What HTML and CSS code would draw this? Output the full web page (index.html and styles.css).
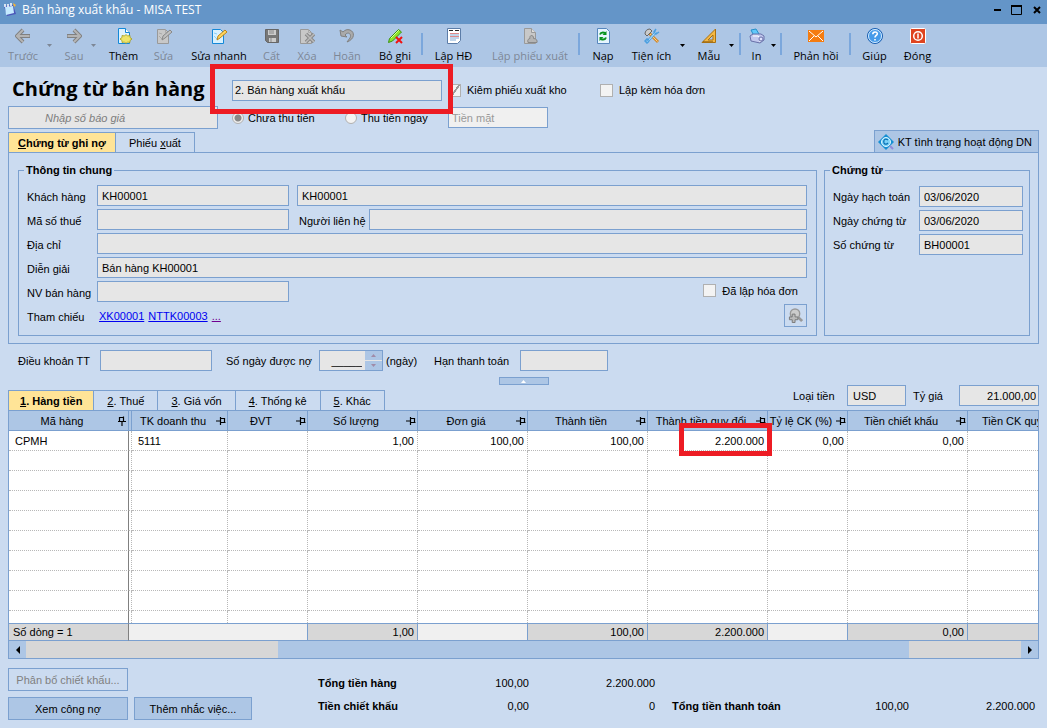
FILE: index.html
```
<!DOCTYPE html>
<html lang="vi">
<head>
<meta charset="utf-8">
<title>Bán hàng xuất khẩu - MISA TEST</title>
<link rel="stylesheet" href="styles.css">
</head>
<body>
<svg class="defs" aria-hidden="true">
  <symbol id="pin" viewBox="0 0 10 8"><path d="M0 4h4M4.500 0v8M4.500 1.500h4v4h-4M4.500 5.500h5" fill="none" stroke="#000" stroke-width="1.200"/></symbol>
  <symbol id="down" viewBox="0 0 5 3"><path d="M0 0h5L2.500 3z" fill="currentColor"/></symbol>
</svg>

<header class="titlebar">
  <svg class="app-icon" viewBox="0 0 14 14"><path d="M1 3l9-1 3 9-9 2z" fill="#4b55b8"/><path d="M2 4l8-1 1 7-8 2z" fill="#c4eaff"/><path d="M2 1v3M5 1v3M8 0v3" stroke="#fff" stroke-width="1.500"/><path d="M10 0l3 2-2 2z" fill="#ffb52b"/></svg>
  <span class="title">Bán hàng xuất khẩu - MISA TEST</span>
  <button class="win" aria-label="Thu nhỏ"><svg viewBox="0 0 12 12"><path d="M3 6h7" stroke="#000" stroke-width="2"/></svg></button>
  <button class="win" aria-label="Phóng to"><svg viewBox="0 0 12 12"><path d="M.5 10.500h10v-9H.5z" fill="none" stroke="#000"/><path d="M0 2h11" stroke="#000" stroke-width="2"/></svg></button>
  <button class="win" aria-label="Đóng cửa sổ"><svg viewBox="0 0 12 12"><path d="M3 3l6 6M9 3l-6 6" stroke="#000" stroke-width="2"/></svg></button>
</header>

<nav class="toolbar">
  <button class="tool off"><svg viewBox="0 0 16 16"><path d="M8 2L2 8l6 6M2.500 8H15" fill="none" stroke="#808080" stroke-width="4"/><path d="M8 2L2 8l6 6M2.500 8H14.500" fill="none" stroke="#b4b4b4" stroke-width="2"/></svg>Trước</button>
  <button class="drop off" aria-label="Mở Trước"><svg><use href="#down"/></svg></button>
  <button class="tool off"><svg viewBox="0 0 16 16"><path d="M8 2l6 6-6 6M13.500 8H1" fill="none" stroke="#808080" stroke-width="4"/><path d="M8 2l6 6-6 6M13.500 8H1.500" fill="none" stroke="#b4b4b4" stroke-width="2"/></svg>Sau</button>
  <button class="drop off" aria-label="Mở Sau"><svg><use href="#down"/></svg></button>
  <button class="tool"><svg viewBox="0 0 16 16"><path d="M2.500.500h7l4 4v11h-11z" fill="#dff3ff" stroke="#1488d8"/><path d="M9.500.500v4h4" fill="#fff" stroke="#1488d8"/><path d="M10 6.500l1.500 1.500 2.500-.500v2l2 1.500-2 1.500v2l-2.500-.500-1.500 1.500-1.500-1.500-2.500.500v-2L4 11l2-1.500v-2l2.500.500z" fill="#eee56b" stroke="#a39b18" stroke-width=".8"/></svg>Thêm</button>
  <button class="tool off"><svg viewBox="0 0 16 16"><path d="M1.500 1.500h8l3 3v11h-11z" fill="#c8c8c8" stroke="#999"/><path d="M9.500 1.500v3h3M3 5l3 1M3 8l3 3" fill="none" stroke="#aaa"/><path d="M6 12l1-4 7-6 2 2-7 6z" fill="#c0c0c0" stroke="#888"/></svg>Sửa</button>
  <button class="tool"><svg viewBox="0 0 16 16"><path d="M1.500 1.500h8l3 3v11h-11z" fill="#d8f1ff" stroke="#1488d8"/><path d="M3 5l3 1M3 8l3 3" stroke="#8ad0fa"/><path d="M6 12l1-4 7-6 2 2-7 6z" fill="#ffd65c" stroke="#bd8419"/></svg>Sửa nhanh</button>
  <button class="tool off"><svg viewBox="0 0 16 16"><path d="M1.500 1.500h13v13h-11l-2-2z" fill="#777" stroke="#666"/><path d="M4 2h8v5H4zM5 10h7v4H5z" fill="#ccc"/><path d="M5 3h5M5 5h5M7 10v4" stroke="#888"/></svg>Cất</button>
  <button class="tool off"><svg viewBox="0 0 16 16"><path d="M1.500 1.500h8l3 3v11h-11z" fill="#c8c8c8" stroke="#999"/><path d="M9.500 1.500v3h3" fill="none" stroke="#aaa"/><path d="M7 6l8 8M15 6l-8 8" stroke="#888" stroke-width="3.600"/><path d="M7 6l8 8M15 6l-8 8" stroke="#bbb" stroke-width="1.500"/></svg>Xóa</button>
  <button class="tool off"><svg viewBox="0 0 16 16"><path d="M1 2l1 6 6 1-2-2c3-4 7-1 5 3l-3 4c8-3 8-10 3-12-3-1-5 0-7 2z" fill="#aaa" stroke="#808080"/></svg>Hoãn</button>
  <button class="tool"><svg viewBox="0 0 16 16"><path d="M1.500 14.500l1-4 9-9 3 2.500-9 9z" fill="#8ce52c" stroke="#3a9212"/><path d="M4 10l8-8" stroke="#d8ff9e"/><path d="M9 9l6 6M15 9l-6 6" stroke="#f01010" stroke-width="2"/></svg>Bỏ ghi</button>
  <span class="sep"></span>
  <button class="tool"><svg viewBox="0 0 16 16"><path d="M1.500.500h13v12l-3 3h-10z" fill="#fff" stroke="#5c7da8"/><path d="M3 2.500h4M9 2.500h4" stroke="#222"/><path d="M4 5.500h9M4 8.500h9" stroke="#e08a8a"/><path d="M4 7h9M4 10h9M4 12h6" stroke="#7fa9d6"/></svg>Lập HĐ</button>
  <button class="tool off"><svg viewBox="0 0 16 16"><path d="M2.500.500h7l4 4v11h-11z" fill="#c8c8c8" stroke="#999"/><path d="M9.500.500v4h4" fill="#ddd" stroke="#999"/><path d="M6 14.500c-1-3 1-4 2-4-1-4 4-4 3.500 0 3 0 4 2 3.500 4z" fill="#b4b4b4" stroke="#888"/></svg>Lập phiếu xuất</button>
  <span class="sep"></span>
  <button class="tool"><svg viewBox="0 0 16 16"><path d="M2.500.500h9l3 3v12h-12z" fill="#e6f5ff" stroke="#5686bd"/><path d="M5 6.500c1-3 5-2 5-1M11 9.500c-1 3-5 2-5 1" fill="none" stroke="#07931d" stroke-width="2"/><path d="M11.500 3v4h-4zM4.500 13V9h4z" fill="#07931d"/></svg>Nạp</button>
  <button class="tool"><svg viewBox="0 0 16 16"><path d="M5 5l9 9" stroke="#d08a30" stroke-width="3"/><path d="M6 6l7.500 7.500" stroke="#ffd080"/><path d="M1 6c0-3 2-5 5-5l2 2-5 5z" fill="#ccc" stroke="#666"/><path d="M3 14l9-10" stroke="#4a9fe0" stroke-width="2.600"/><path d="M3 14l9-10" stroke="#d5efff"/><path d="M12 1l-2 3 2 2 3-2M5 12l-2-1-2 2 2 2 2-2" fill="none" stroke="#4a9fe0" stroke-width="1.500"/></svg>Tiện ích</button>
  <button class="drop" aria-label="Mở Tiện ích"><svg><use href="#down"/></svg></button>
  <button class="tool"><svg viewBox="0 0 16 16"><path d="M1 14.500L14.500 1v13.500z" fill="#f5b844" stroke="#a97010"/><path d="M7 12l5-5v5z" fill="#adc6e5" stroke="#a97010"/><path d="M3 14v-1M5 14v-1M7 14v-1M9 14v-1M11 14v-1" stroke="#704500"/></svg>Mẫu</button>
  <button class="drop" aria-label="Mở Mẫu"><svg><use href="#down"/></svg></button>
  <span class="sep"></span>
  <button class="tool"><svg viewBox="0 0 16 16"><path d="M2 2l5-1 3 5-5 2z" fill="#62c8fa" stroke="#278fc9"/><path d="M1 8l3-2h8l3 2v4l-4 3-9-2z" fill="#c2c8ee" stroke="#6870a8"/><path d="M4 8h5l2 2v4" fill="none" stroke="#fff"/><circle cx="12" cy="11" r="2" fill="#dfe3ff" stroke="#6870a8"/></svg>In</button>
  <button class="drop" aria-label="Mở In"><svg><use href="#down"/></svg></button>
  <span class="sep"></span>
  <button class="tool"><svg viewBox="0 0 16 16"><path d="M0 2h16v12H0z" fill="#f57c10"/><path d="M1 3l7 6 7-6M1 13l5-5M15 13l-5-5" fill="none" stroke="#fff"/></svg>Phản hồi</button>
  <span class="sep"></span>
  <button class="tool"><svg viewBox="0 0 16 16"><circle cx="8" cy="8" r="7.500" fill="#469be9" stroke="#1b5fb0"/><circle cx="8" cy="8" r="6.500" fill="none" stroke="#d6ecff"/><path d="M5.800 6.300c0-3 4.500-3 4.500-.5C10.300 7.500 8 7.500 8 9.500M8 11v1.600" fill="none" stroke="#fff" stroke-width="1.600"/></svg>Giúp</button>
  <button class="tool"><svg viewBox="0 0 16 16"><rect x=".5" y=".5" width="15" height="15" rx="1" fill="#df4420" stroke="#fff"/><circle cx="8" cy="8" r="4.300" fill="none" stroke="#fff" stroke-width="1.500"/><path d="M8 5.500v5" stroke="#fff" stroke-width="1.500"/></svg>Đóng</button>
</nav>

<main class="content">
  <section class="top">
    <h1>Chứng từ bán hàng</h1>
    <div class="kind"><input class="field" aria-label="Loại chứng từ" value="2. Bán hàng xuất khẩu"><span class="mark mark-kind"></span></div>
    <label class="check"><input type="checkbox" checked disabled>Kiêm phiếu xuất kho</label>
    <label class="check"><input type="checkbox" disabled>Lập kèm hóa đơn</label>
    <input class="field quote" aria-label="Số báo giá" placeholder="Nhập số báo giá">
    <div class="radios">
      <label class="radio"><input type="radio" name="pay" checked disabled>Chưa thu tiền</label>
      <label class="radio"><input type="radio" name="pay" disabled>Thu tiền ngay</label>
    </div>
    <input class="field cash" aria-label="Hình thức" value="Tiền mặt" disabled>
  </section>

  <div class="tabs main-tabs">
    <button class="tab active"><span><u>C</u>hứng từ ghi nợ</span></button>
    <button class="tab"><span>Phiếu <u>x</u>uất</span></button>
    <button class="status"><svg viewBox="0 0 16 16"><path d="M8 0l8 8-8 8-8-8z" fill="#168fd3"/><circle cx="8" cy="8" r="4.500" fill="#7bd2f7" stroke="#dff6ff"/><path d="M10 6c-3-2-5 0-4 3 1 2 3 1 4 0" fill="none" stroke="#0870b5" stroke-width="1.300"/><path d="M12 12l3 3" stroke="#8f8cdc" stroke-width="2"/></svg>KT tình trạng hoạt động DN</button>
  </div>

  <section class="panel">
    <fieldset class="group general">
      <legend>Thông tin chung</legend>
      <div class="row"><label class="cap" for="kh">Khách hàng</label><input id="kh" class="field w-code" value="KH00001"><input class="field grow" aria-label="Tên khách hàng" value="KH00001"></div>
      <div class="row"><label class="cap" for="mst">Mã số thuế</label><input id="mst" class="field w-code"><label class="contact" for="nlh">Người liên hệ</label><input id="nlh" class="field grow flush"></div>
      <div class="row"><label class="cap" for="dc">Địa chỉ</label><input id="dc" class="field grow flush"></div>
      <div class="row"><label class="cap" for="dg">Diễn giải</label><input id="dg" class="field grow flush" value="Bán hàng KH00001"></div>
      <div class="row"><label class="cap" for="nv">NV bán hàng</label><input id="nv" class="field w-code"><label class="check made"><input type="checkbox" disabled>Đã lập hóa đơn</label></div>
      <div class="row"><span class="cap">Tham chiếu</span><span class="refs"><a href="#">XK00001</a> <a href="#">NTTK00003</a> <a href="#" class="more">...</a></span><button class="find" aria-label="Tìm"><svg viewBox="0 0 16 16"><circle cx="7.500" cy="6" r="5" fill="#ccc" stroke="#999" stroke-width="1.500"/><path d="M11 10l4 4" stroke="#999" stroke-width="3"/><path d="M4.500 6.500h3v3h3v3h-3v3h-3v-3h-3v-3h3z" fill="#bbb" stroke="#777"/></svg></button></div>
    </fieldset>
    <fieldset class="group voucher">
      <legend>Chứng từ</legend>
      <div class="row"><label class="cap" for="nht">Ngày hạch toán</label><input id="nht" class="field grow" value="03/06/2020"></div>
      <div class="row"><label class="cap" for="nct">Ngày chứng từ</label><input id="nct" class="field grow" value="03/06/2020"></div>
      <div class="row"><label class="cap" for="sct">Số chứng từ</label><input id="sct" class="field grow" value="BH00001"></div>
    </fieldset>
  </section>

  <section class="terms">
    <label class="t-cap1" for="dk">Điều khoản TT</label><input id="dk" class="field t-in1">
    <label class="t-cap2" for="sn">Số ngày được nợ</label>
    <span class="spin"><input id="sn" value="_____"><span class="steps"><button aria-label="Tăng"><svg viewBox="0 0 5 3"><path d="M0 3h5L2.500 0z" fill="#a08ba8"/></svg></button><button aria-label="Giảm"><svg viewBox="0 0 5 3"><path d="M0 0h5L2.500 3z" fill="#a08ba8"/></svg></button></span></span>
    <span class="unit">(ngày)</span>
    <label class="t-cap3" for="ht">Hạn thanh toán</label><input id="ht" class="field t-in3">
  </section>

  <div class="fold"><button aria-label="Thu gọn"><svg viewBox="0 0 5 3"><path d="M0 3h5L2.500 0z" fill="#fff"/></svg></button></div>

  <div class="tabs grid-tabs">
    <button class="tab active"><span><u>1</u>. Hàng tiền</span></button>
    <button class="tab"><span><u>2</u>. Thuế</span></button>
    <button class="tab"><span><u>3</u>. Giá vốn</span></button>
    <button class="tab"><span><u>4</u>. Thống kê</span></button>
    <button class="tab"><span><u>5</u>. Khác</span></button>
    <div class="money"><label class="m-cap1" for="lt">Loại tiền</label><input id="lt" class="field m-in1" value="USD"><label class="m-cap2" for="tg">Tỷ giá</label><input id="tg" class="field m-in2" value="21.000,00"></div>
  </div>

  <section class="gridbox">
    <div class="scroller">
      <table>
        <colgroup><col class="c120"><col class="c3"><col class="c96"><col class="c80"><col class="c110"><col class="c110"><col class="c120"><col class="c120"><col class="c80"><col class="c120"><col class="c120"></colgroup>
        <thead><tr>
          <th><div><span>Mã hàng</span><svg class="up"><use href="#pin"/></svg></div></th><th></th>
          <th><div><span>TK doanh thu</span><svg><use href="#pin"/></svg></div></th>
          <th><div><span>ĐVT</span><svg><use href="#pin"/></svg></div></th>
          <th><div><span>Số lượng</span><svg><use href="#pin"/></svg></div></th>
          <th><div><span>Đơn giá</span><svg><use href="#pin"/></svg></div></th>
          <th><div><span>Thành tiền</span><svg><use href="#pin"/></svg></div></th>
          <th><div><span>Thành tiền quy đổi</span><svg><use href="#pin"/></svg></div></th>
          <th><div><span>Tỷ lệ CK (%)</span><svg><use href="#pin"/></svg></div></th>
          <th><div><span>Tiền chiết khấu</span><svg><use href="#pin"/></svg></div></th>
          <th><div><span>Tiền CK quy đổi</span><svg><use href="#pin"/></svg></div></th>
        </tr></thead>
        <tbody>
          <tr><td>CPMH</td><td></td><td>5111</td><td></td><td class="num">1,00</td><td class="num">100,00</td><td class="num">100,00</td><td class="num marked">2.200.000<span class="mark mark-cell"></span></td><td class="num">0,00</td><td class="num">0,00</td><td></td></tr>
          <tr><td></td><td></td><td></td><td></td><td></td><td></td><td></td><td></td><td></td><td></td><td></td></tr>
          <tr><td></td><td></td><td></td><td></td><td></td><td></td><td></td><td></td><td></td><td></td><td></td></tr>
          <tr><td></td><td></td><td></td><td></td><td></td><td></td><td></td><td></td><td></td><td></td><td></td></tr>
          <tr><td></td><td></td><td></td><td></td><td></td><td></td><td></td><td></td><td></td><td></td><td></td></tr>
          <tr><td></td><td></td><td></td><td></td><td></td><td></td><td></td><td></td><td></td><td></td><td></td></tr>
          <tr><td></td><td></td><td></td><td></td><td></td><td></td><td></td><td></td><td></td><td></td><td></td></tr>
          <tr><td></td><td></td><td></td><td></td><td></td><td></td><td></td><td></td><td></td><td></td><td></td></tr>
          <tr><td></td><td></td><td></td><td></td><td></td><td></td><td></td><td></td><td></td><td></td><td></td></tr>
          <tr class="cut"><td></td><td></td><td></td><td></td><td></td><td></td><td></td><td></td><td></td><td></td><td></td></tr>
        </tbody>
        <tfoot><tr><td>Số dòng = 1</td><td colspan="3" class="blank"></td><td class="num">1,00</td><td class="blank"></td><td class="num">100,00</td><td class="num">2.200.000</td><td class="blank"></td><td class="num">0,00</td><td></td></tr></tfoot>
      </table>
    </div>
    <div class="scrollbar">
      <button aria-label="Cuộn trái"><svg viewBox="0 0 4 8"><path d="M4 0v8L0 4z"/></svg></button>
      <span class="track before"></span><span class="thumb"></span><span class="track after"></span>
      <button aria-label="Cuộn phải"><svg viewBox="0 0 4 8"><path d="M0 0v8l4-4z"/></svg></button>
    </div>
  </section>

  <footer class="bottom">
    <div class="actions">
      <button class="btn" disabled>Phân bổ chiết khấu...</button>
      <button class="btn second">Xem công nợ</button>
      <button class="btn second">Thêm nhắc việc...</button>
    </div>
    <div class="totals">
      <b>Tổng tiền hàng</b><span>100,00</span><span>2.200.000</span><b></b><span></span><span></span>
      <b>Tiền chiết khấu</b><span>0,00</span><span>0</span><b class="pay">Tổng tiền thanh toán</b><span>100,00</span><span>2.200.000</span>
    </div>
  </footer>
</main>
</body>
</html>
```
FILE: styles.css
```
* { box-sizing: border-box; }
body {
  margin: 0;
  background: #cbdbf0;
  color: #000;
  font: 11px/14px "Liberation Sans", Arial, sans-serif;
}
button, input { font: inherit; color: inherit; margin: 0; padding: 0; border-radius: 0; }
button { background: none; border: 0; white-space: nowrap; }
label, span, b { white-space: nowrap; }
svg { display: block; flex: none; }
.defs { position: absolute; width: 0; height: 0; }

.titlebar {
  display: flex;
  align-items: center;
  height: 24px;
  padding: 0 0 5px 3px;
  background: #6495c8;
}
.app-icon { width: 14px; height: 14px; }
.title {
  flex: 1;
  margin-left: 5px;
  color: #fff;
  font: 12px/18px "Open Sans", "Noto Sans", sans-serif;
}
.win { width: 20px; display: flex; justify-content: center; }
.win svg { width: 12px; height: 12px; }

.toolbar {
  display: grid;
  grid-template-columns: 46px 12px 32px 14px 39px 41px 70px 35px 36px 44px 52px 2px 61px 92px 6px 42px 55px 11px 38px 9px 6px 27px 8px 6px 64px 4px 45px 41px;
  height: 43px;
  background: #adc6e5;
}
.tool {
  display: flex;
  flex-direction: column;
  align-items: center;
  padding-top: 4px;
  font: 11px/16px "Open Sans", "Noto Sans", sans-serif;
}
.tool svg { width: 16px; height: 16px; margin-bottom: 4px; }
.off { color: #7d8796; }
.drop { padding: 20px 0 0 1px; display: flex; align-items: flex-start; }
.drop svg { width: 5px; height: 3px; }
.sep { width: 2px; height: 22px; margin-top: 9px; justify-self: center; background: #7ba7dc; }

.content { padding: 0 8px; }

.field {
  height: 21px;
  min-width: 0;
  padding: 0 4px;
  border: 1px solid #7ba0cf;
  background: #e6e6e6;
}
.check, .radio { display: flex; align-items: center; }
.check { gap: 6px; }
.radio { gap: 4px; }
.check input, .radio input { appearance: none; flex: none; background: #f3f3f3; border: 1px solid #b0b0b0; }
.check input { width: 13px; height: 13px; }
.check input:checked { background: linear-gradient(125deg, transparent 48%, #999 49%, #999 60%, transparent 61%), #f3f3f3; }
.radio input { width: 12px; height: 12px; border-radius: 50%; }
.radio input:checked { background: radial-gradient(circle, #888 0 3px, #eee 4px); }

.top {
  display: grid;
  grid-template-columns: 224px 216px 152px 1fr;
  grid-template-rows: 39px 23px;
  align-items: center;
}
h1 {
  margin: 4px 0 0 4px;
  font: bold 20px/30px "Open Sans", "Noto Sans", sans-serif;
  white-space: nowrap;
}
.kind { position: relative; padding-top: 7px; }
.kind .field { display: block; width: 210px; padding-left: 2px; }
.top > .check { padding-top: 7px; }
.mark { position: absolute; border: 5px solid #ed1c24; z-index: 2; }
.mark-kind { left: -22px; top: -9px; width: 243px; height: 50px; }
.quote { width: 210px; height: 23px; padding-left: 36px; font-style: italic; }
.quote::placeholder { color: #7d7d7d; opacity: 1; }
.radios { display: flex; }
.radios .radio { width: 111px; }
.cash { width: 100px; padding-left: 3px; background: #f0f0f0; color: #999; }
.radios { gap: 2px; }
.radios .radio { flex: none; }

.tabs { display: flex; align-items: flex-end; }
.main-tabs { height: 23px; }
.tab {
  height: 20px;
  padding: 0 13px;
  border: 1px solid #7ba0cf;
  border-width: 1px 1px 0 0;
}
.tab.active { background: #ffe497; border-left-width: 1px; padding: 0 9px; font-weight: bold; }
.status {
  display: flex;
  align-items: center;
  gap: 4px;
  height: 22px;
  margin-left: auto;
  padding: 0 6px 0 3px;
  border: 1px solid #7ba0cf;
  border-bottom: 0;
  background: #adc6e5;
}
.status svg { width: 16px; height: 16px; }

.panel {
  display: grid;
  grid-template-columns: 1fr 206px;
  gap: 7px;
  padding: 10px 8px 7px 9px;
  border: 1px solid #7ba0cf;
}
.group { min-width: 0; margin: 0; padding: 8px 9px 6px 8px; border: 1px solid #7ba0cf; }
.group.voucher { padding: 9px 6px 6px 8px; }
legend { margin-left: -3px; padding: 0 2px; font-weight: bold; line-height: 14px; }
.row { display: flex; align-items: center; height: 21px; margin-bottom: 3px; }
.cap { width: 70px; padding-top: 2px; }
.voucher .cap { width: 86px; padding-top: 0; }
.w-code { width: 192px; }
.grow { flex: 1; width: 0; margin-left: 8px; }
.flush, .voucher .grow { margin-left: 0; }
.contact { width: 80px; padding: 2px 0 0 10px; }
.made { margin-left: auto; padding: 0 9px 2px 0; }
.refs { padding-left: 2px; }
.refs a { color: #0000f0; margin-right: 1px; }
.refs .more { color: #700090; }
.find { width: 23px; height: 23px; margin-left: auto; padding: 3px; border: 1px solid #7ba0cf; }
.find svg { width: 15px; height: 15px; }

.terms { display: flex; align-items: center; height: 21px; margin-top: 6px; padding-left: 10px; }
.t-cap1 { width: 82px; }
.t-in1 { width: 112px; }
.t-cap2 { width: 93px; margin-left: 14px; }
.spin { display: flex; width: 64px; height: 21px; border: 1px solid #7ba0cf; background: #e6e6e6; }
.spin input { flex: 1; width: 0; border: 0; background: none; text-align: right; padding-right: 3px; }
.steps { display: grid; grid-template-rows: 1fr 1fr; gap: 1px; width: 17px; }
.steps button { display: flex; align-items: center; justify-content: center; background: #adc6e5; }
.steps svg, .fold svg { width: 5px; height: 3px; }
.unit { width: 48px; margin-left: 3px; }
.t-cap3 { width: 86px; }
.t-in3 { width: 88px; }

.fold { display: flex; justify-content: center; padding-top: 6px; height: 14px; }
.fold button { display: flex; align-items: center; justify-content: center; width: 50px; height: 8px; border: 1px solid #7ba0cf; background: #adc6e5; }

.grid-tabs { height: 25px; }
.grid-tabs .tab.active { padding: 0 11px; }
.money { display: flex; align-items: center; align-self: flex-start; margin-left: auto; }
.m-cap1 { width: 54px; }
.m-in1 { width: 59px; padding-left: 5px; }
.m-cap2 { width: 46px; margin-left: 7px; }
.m-in2 { width: 80px; text-align: right; padding-right: 2px; }

.gridbox { border: 1px solid #7ba0cf; background: #fff; }
.scroller { overflow: hidden; }
table { width: 1079px; border-collapse: separate; border-spacing: 0; table-layout: fixed; }
.c120 { width: 120px; }
.c110 { width: 110px; }
.c96 { width: 96px; }
.c80 { width: 80px; }
.c3 { width: 3px; }
th, td { height: 20px; padding: 0; overflow: hidden; white-space: nowrap; line-height: 14px; }
th { background: #adc6e5; border: 1px solid #7ba0cf; border-width: 0 1px 1px 0; font-weight: normal; }
th div { display: flex; align-items: center; }
th span { flex: 1; width: 0; text-align: center; }
th svg { width: 10px; height: 8px; margin: 0 1px 0 2px; }
th svg.up { transform: rotate(-90deg); }
td { border: 1px dotted #b8b8b8; border-width: 0 1px 1px 0; }
td:first-child { padding-left: 6px; border-right: 1px solid #808080; }
td:nth-child(3) { padding-left: 6px; }
.num { text-align: right; padding-right: 3px; }
.marked { position: relative; overflow: visible; }
.mark-cell { left: 31px; top: -8px; width: 93px; height: 33px; }
.cut td { height: 12px; border-bottom: 0; }
tfoot td { height: 18px; background: #d7d7d7; border: 1px solid #7ba0cf; border-left: 0; }
tfoot td:first-child { padding-left: 4px; border-right-color: #808080; }
tfoot td:nth-child(2), tfoot td:nth-child(3) { padding-left: 0; }
tfoot .blank { background: #f0f0f0; }

.scrollbar { display: flex; height: 17px; background: #adc6e5; }
.scrollbar button { display: flex; align-items: center; justify-content: center; width: 17px; }
.scrollbar svg { width: 4px; height: 8px; }
.track { background: #d7d7d7; }
.before { flex: 252; }
.thumb { flex: 631; }
.after { flex: 112; }

.bottom { display: grid; grid-template-columns: 244px 1fr; gap: 66px; padding-top: 9px; }
.actions { display: grid; grid-template-columns: 120px 118px; gap: 6px; }
.btn { height: 23px; border: 1px solid #7ba0cf; }
.btn:disabled { grid-column: 1 / -1; width: 120px; color: #808080; }
.second { background: #adc6e5; }
.totals {
  display: grid;
  grid-template-columns: 130px 81px 126px 1fr 80px 126px;
  grid-auto-rows: 23px;
  align-items: center;
  padding: 3px 4px 0 0;
}
.totals span { text-align: right; }
.pay { padding-left: 17px; }
```
